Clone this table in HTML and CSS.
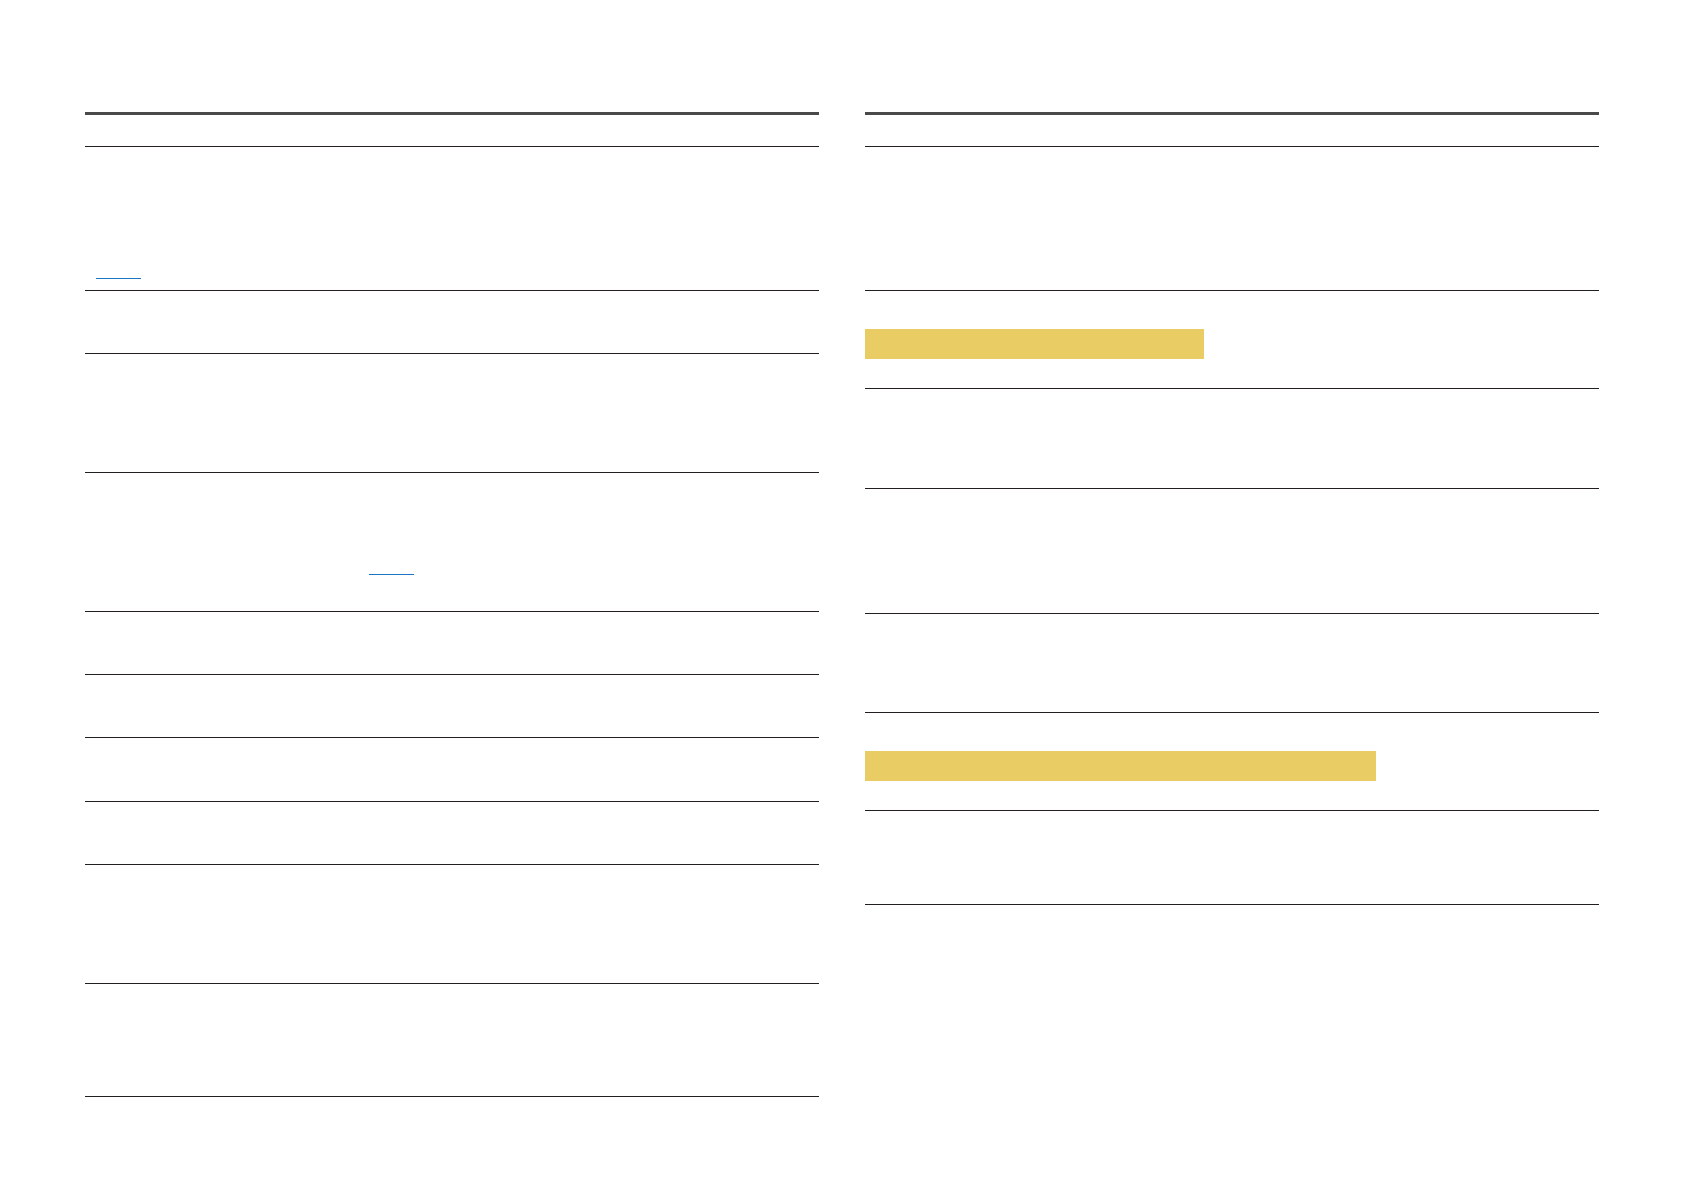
FILE: index.html
```html
<!DOCTYPE html>
<html lang="en">
<head>
<meta charset="utf-8">
<title>Specifications</title>
<link rel="stylesheet" href="styles.css">
</head>
<body>
<div class="page">
  <section class="col">
    <div class="head"></div>
    <div class="row h143"><span class="link link-a"></span></div>
    <div class="row h62"></div>
    <div class="row h118"></div>
    <div class="row h138"><span class="link link-b"></span></div>
    <div class="row h62"></div>
    <div class="row h62"></div>
    <div class="row h63"></div>
    <div class="row h62"></div>
    <div class="row h118"></div>
    <div class="row h112"></div>
  </section>
  <section class="col">
    <div class="head"></div>
    <div class="row h143"></div>
    <div class="sub"><div class="bar bar-a"></div></div>
    <div class="row h99"></div>
    <div class="row h124"></div>
    <div class="row h98"></div>
    <div class="sub"><div class="bar bar-b"></div></div>
    <div class="row h93"></div>
  </section>
</div>
</body>
</html>
```
FILE: styles.css
```css
html, body {
  margin: 0;
  padding: 0;
  background: #ffffff;
  font-family: "Liberation Sans", Arial, sans-serif;
}
.page {
  display: flex;
  gap: 46px;
  padding: 112px 0 0 85px;
}
.col {
  width: 734px;
  display: flex;
  flex-direction: column;
}
.head {
  height: 31px;
  border-top: 3px solid #4a4a4a;
  border-bottom: 1px solid #231f20;
}
.row {
  position: relative;
  border-bottom: 1px solid #231f20;
}
.h62 { height: 62px; }
.h63 { height: 63px; }
.h93 { height: 93px; }
.h98 { height: 98px; }
.h99 { height: 99px; }
.h112 { height: 112px; }
.h118 { height: 118px; }
.h124 { height: 124px; }
.h138 { height: 138px; }
.h143 { height: 143px; }
.link {
  position: absolute;
  width: 45px;
  height: 0;
  border-bottom: 1px solid #1a75c4;
}
.link-a { left: 11px; top: 131px; }
.link-b { left: 284px; top: 101px; }
.sub {
  padding: 38px 0 29px;
  border-bottom: 1px solid #231f20;
}
.bar {
  height: 30px;
  background: #eacc64;
}
.bar-a { width: 339px; }
.bar-b { width: 511px; }
```
